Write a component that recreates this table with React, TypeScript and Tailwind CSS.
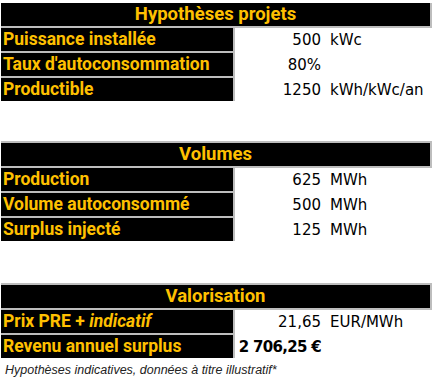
const label = "font-['Roboto',sans-serif] font-bold text-[17.5px] text-[#ffc000]";
const val = "font-['DejaVu_Sans',Verdana,sans-serif] text-[15px] text-black";

type Row = { label: React.ReactNode; value: string; unit?: string; bold?: boolean };

const Section = ({ title, rows, top }: { title: string; rows: Row[]; top?: boolean }) => (
  <div className="flex flex-col">
    <div
      className={`ml-[1px] w-[431px] h-[25px] bg-black border-r-2 border-b-2 border-[#bdbdbd] flex items-center justify-center ${
        top ? "border-t-2 h-[27px]" : ""
      }`}
    >
      <span className={`${label} text-[18.5px] leading-none`}>{title}</span>
    </div>
    {rows.map((r, i) => (
      <div key={i} className="flex h-[25px]">
        <div
          className={`ml-[1px] w-[234px] bg-black border-r-2 border-[#bdbdbd] flex items-center pl-[2px] ${
            i < rows.length - 1 ? "border-b-2" : "h-[23px]"
          }`}
        >
          <span className={`${label} leading-none`}>{r.label}</span>
        </div>
        <div className="flex items-center">
          <span
            className={`${val} w-[86px] text-right ${r.bold ? "font-bold tracking-[-0.7px]" : ""} leading-none`}
          >
            {r.value}
          </span>
          {r.unit && <span className={`${val} pl-[9px] leading-none`}>{r.unit}</span>}
        </div>
      </div>
    ))}
  </div>
);

export default function App() {
  return (
    <div className="w-[433px] h-[377px] bg-white overflow-hidden pt-[3px]">
      <Section
        title="Hypothèses projets"
        rows={[
          { label: "Puissance installée", value: "500", unit: "kWc" },
          { label: "Taux d'autoconsommation", value: "80%" },
          { label: "Productible", value: "1250", unit: "kWh/kWc/an" },
        ]}
      />
      <div className="h-[38px]" />
      <Section
        top
        title="Volumes"
        rows={[
          { label: "Production", value: "625", unit: "MWh" },
          { label: "Volume autoconsommé", value: "500", unit: "MWh" },
          { label: "Surplus injecté", value: "125", unit: "MWh" },
        ]}
      />
      <div className="h-[40px]" />
      <Section
        top
        title="Valorisation"
        rows={[
          {
            label: (
              <>
                Prix PRE + <i>indicatif</i>
              </>
            ),
            value: "21,65",
            unit: "EUR/MWh",
          },
          { label: "Revenu annuel surplus", value: "2 706,25 €", bold: true },
        ]}
      />
      <p className="pl-[5px] pt-[4px] font-['Liberation_Sans',Arial,sans-serif] italic text-[12.5px] text-[#222] leading-none">
        Hypothèses indicatives, données à titre illustratif*
      </p>
    </div>
  );
}
